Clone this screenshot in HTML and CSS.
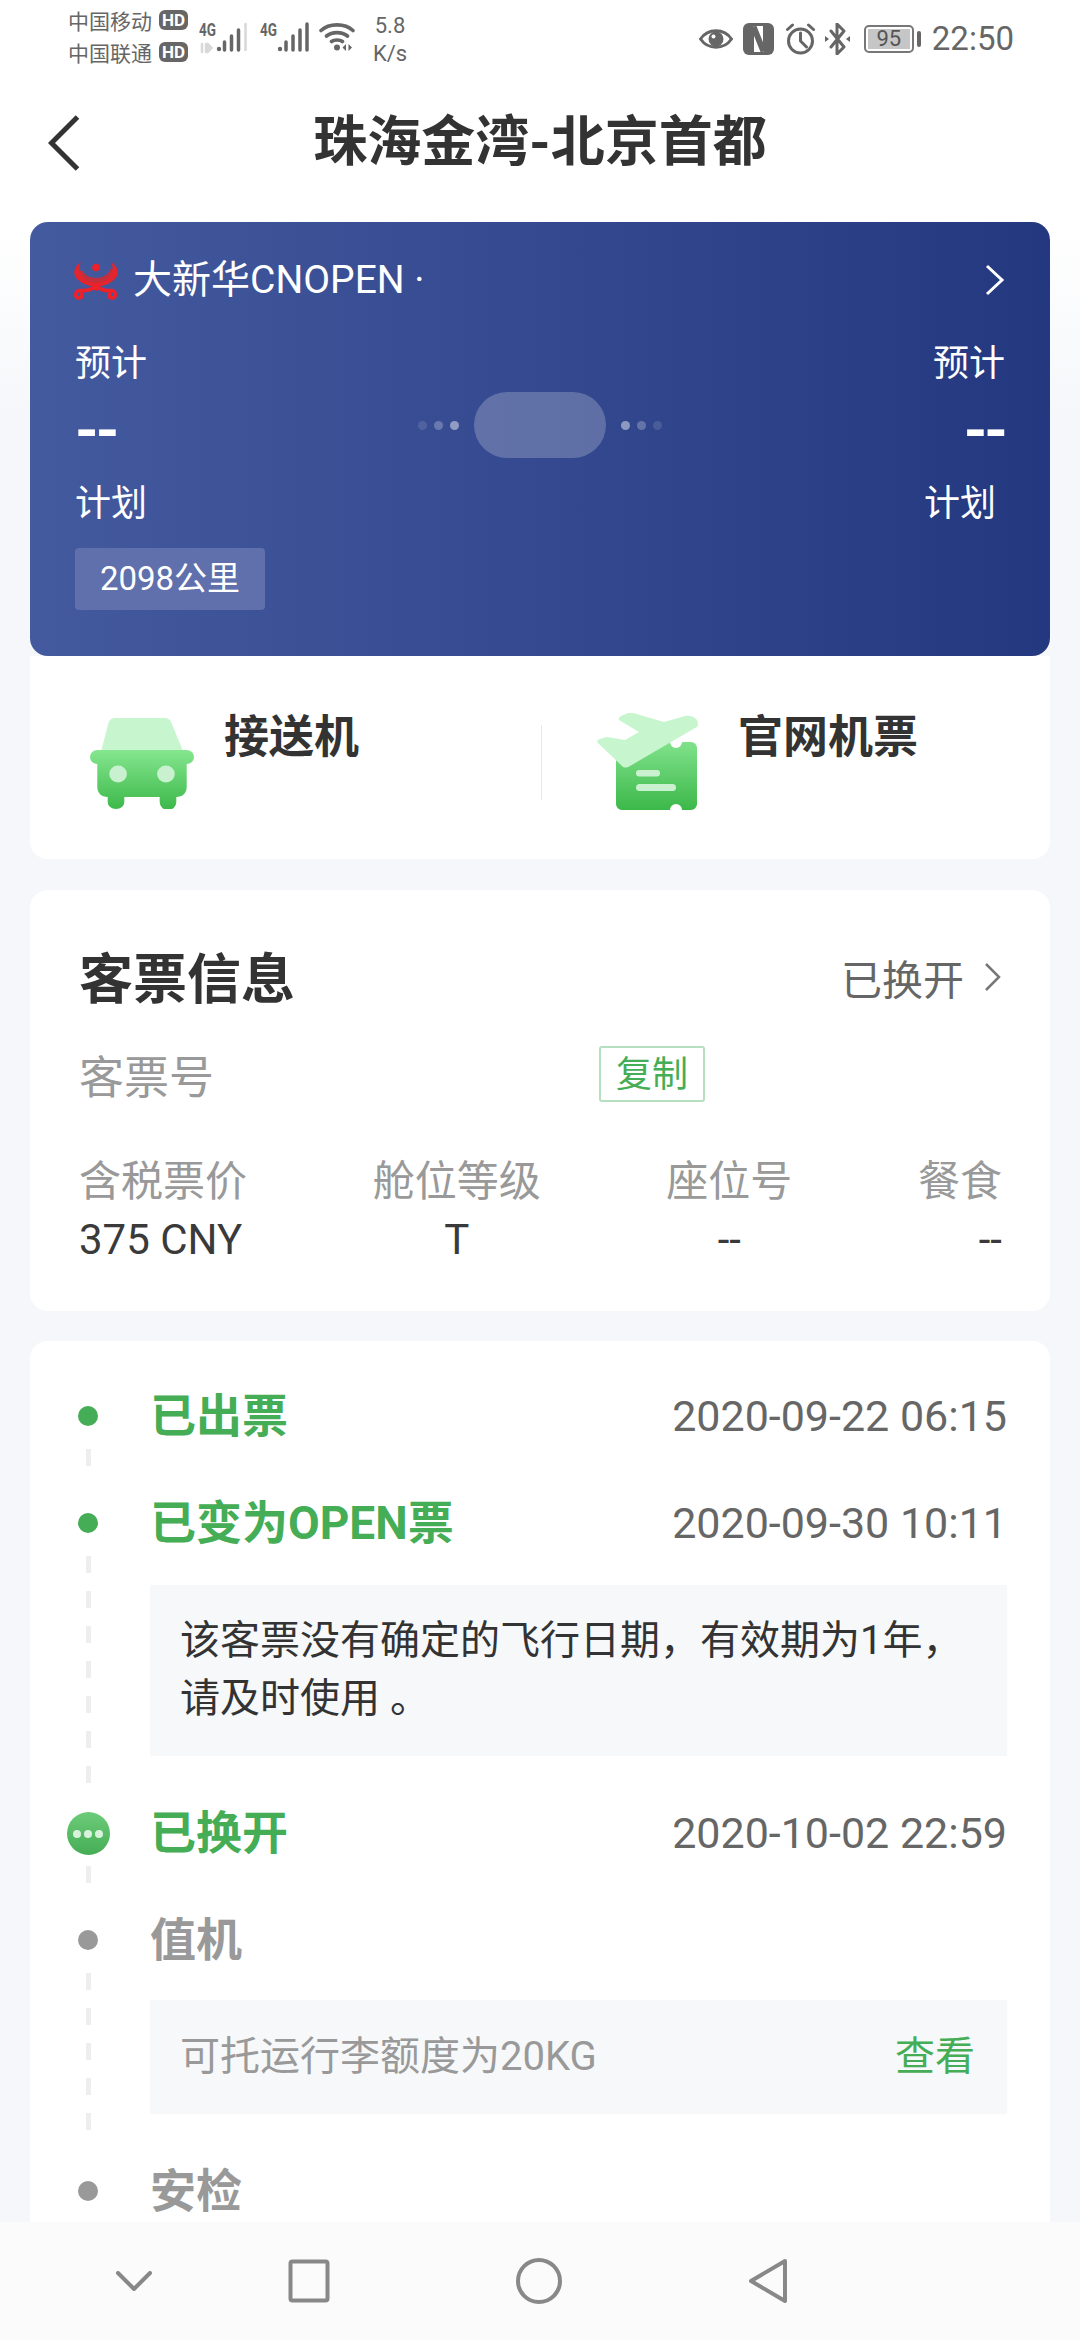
FILE: index.html
```html
<!DOCTYPE html>
<html lang="zh-CN">
<head>
<meta charset="utf-8">
<title>珠海金湾-北京首都</title>
<link rel="stylesheet" href="styles.css">
</head>
<body>
<div class="app">
  <div class="status">
    <div class="carriers">
      <div class="carrier"><span>中国移动</span><b class="hd">HD</b></div>
      <div class="carrier"><span>中国联通</span><b class="hd">HD</b></div>
    </div>
    <svg class="sig" viewBox="0 0 50 38">
      <text class="sig-t" x="0" y="20" textLength="17" lengthAdjust="spacingAndGlyphs">4G</text>
      <path class="sig-faint" d="M3 28v8M7 28v8M9.500 29l3 3-3 3zM46.500 8v26" />
      <circle class="sig-f" cx="20" cy="33" r="2.200"/>
      <path class="sig-s" d="M25.500 26v8M32.500 20v14M39.500 14v20"/>
    </svg>
    <svg class="sig sig2" viewBox="0 0 50 38">
      <text class="sig-t" x="0" y="20" textLength="17" lengthAdjust="spacingAndGlyphs">4G</text>
      <circle class="sig-f" cx="20" cy="33" r="2.200"/>
      <path class="sig-s" d="M26 26v8M33 20v14M40 14v20M47 8v26"/>
    </svg>
    <svg class="wifi" viewBox="0 0 36 30">
      <path class="wifi-s" d="M2 8.500C10 1 26 1 34 8.500M7.500 14C13 9.500 23 9.500 28.500 14M12.500 19.500C15 17.500 21 17.500 23.500 19.500"/>
      <circle class="sig-f" cx="18" cy="25.500" r="3"/>
      <path class="sig-f" d="M27 22v7l-3.500-3.500zM29.500 22v7l3.500-3.500z"/>
    </svg>
    <div class="speed"><span>5.8</span><span>K/s</span></div>
    <div class="status-right">
      <svg class="i-eye" viewBox="0 0 34 26">
        <path class="st-line" d="M1.500 13C9 2 25 2 32.500 13 25 24 9 24 1.500 13Z"/>
        <circle class="sig-f" cx="17" cy="13" r="7.500"/>
        <circle class="st-hole" cx="14.500" cy="10.500" r="2"/>
      </svg>
      <svg class="i-nfc" viewBox="0 0 31 32">
        <rect class="sig-f" width="31" height="32" rx="6"/>
        <path class="st-white" d="M10.500 3h10v26h-10z"/>
        <path class="nfc-band" d="M10.500 3.500l10 25"/>
        <path class="nfc-edge" d="M10.500 9v20M20.500 3v20"/>
      </svg>
      <svg class="i-alarm" viewBox="0 0 31 32">
        <circle class="st-line" cx="15.500" cy="18" r="12"/>
        <path class="st-line" d="M15.500 10v8l6 6M2.500 6.500l5-4.500M28.500 6.500l-5-4.500"/>
      </svg>
      <svg class="i-bt" viewBox="0 0 25 32">
        <path class="st-line" d="M6 8l13 16-7 7V1l7 7L6 24"/>
        <path class="sig-f" d="M0 13l4 3-4 3zM25 13l-4 3 4 3z"/>
      </svg>
      <div class="battery"><div class="battery-level">95</div></div>
      <div class="battery-tip"></div>
      <div class="clock">22:50</div>
    </div>
  </div>

  <header class="topbar">
    <svg class="back" viewBox="0 0 32 56"><path d="M29.500 2 3.500 28l26 26"/></svg>
    <h1 class="title">珠海金湾-北京首都</h1>
    <div></div>
  </header>

  <main class="content">
    <section class="flight">
      <div class="flight-head">
        <svg class="logo" viewBox="0 0 45 39">
          <path class="logo-a" d="M8 1C2 5 0 10 2 15c3 6 12 10 21 11 9-1 18-5 21-11 2-5 0-10-6-14 2 4 2 7 0 10-3 4-9 6-15 6S11 15 8 11C6 8 6 5 8 1Z"/>
          <path class="logo-b" d="M8 7c2 6 8 10 15 10s13-4 15-10c1 7-3 11-7 13-5 2-11 2-16 0-4-2-8-6-7-13Z"/>
          <circle class="logo-c" cx="23" cy="6.500" r="3.800"/>
          <path class="logo-curl" d="M23 24C18 30 12 30 7 29.500c-5 0-6 7.500-1 7.500 3 0 4-3 2-4M23 24C28 30 34 30 38 29.500c5 0 6 7.500 1 7.500-3 0-4-3-2-4"/>
          <path class="logo-c" d="M23 21l5 6-5 3-5-3z"/>
        </svg>
        <span class="airline">大新华CNOPEN ·</span>
        <svg class="head-arrow" viewBox="0 0 20 32"><path d="M2 2l15 14L2 30"/></svg>
      </div>
      <div class="flight-body">
        <div class="ends">
          <div class="lbl">预计</div>
          <div class="time">--</div>
          <div class="lbl">计划</div>
          <div class="distance">2098公里</div>
        </div>
        <div class="route">
          <i class="d d1"></i><i class="d d2"></i><i class="d d3"></i>
          <div class="pill"></div>
          <i class="d d3"></i><i class="d d2"></i><i class="d d1"></i>
        </div>
        <div class="ends ends-r">
          <div class="lbl">预计</div>
          <div class="time">--</div>
          <div class="lbl lbl-inset">计划</div>
        </div>
      </div>
    </section>

    <section class="services">
      <div class="service service-l">
        <svg class="i-car" viewBox="0 0 100 92" preserveAspectRatio="none">
          <defs>
            <linearGradient id="gc" x1="0" y1="0" x2="0" y2="1"><stop offset="0" stop-color="#85e68f"/><stop offset="1" stop-color="#3cb849"/></linearGradient>
          </defs>
          <path class="pale" d="M24 1h48c3 0 5 2 6 4l11 28H11L18 5c1-2 3-4 6-4Z"/>
          <path fill="url(#gc)" d="M7 33h86a6.500 6.500 0 0 1 0 14v23c0 6-4 10-10 10v5a7 7 0 0 1-16 0v-5H33v5a8 7 0 0 1-16 0v-5c-6 0-10-4-10-10V47a6.500 6.500 0 0 1 0-14Z"/>
          <circle class="lamp" cx="27" cy="57" r="8.500"/>
          <circle class="lamp" cx="73" cy="57" r="8.500"/>
        </svg>
        <span class="service-name">接送机</span>
      </div>
      <div class="divider"></div>
      <div class="service service-r">
        <svg class="i-ticket" viewBox="0 0 102 98">
          <defs>
            <linearGradient id="gt" x1="0" y1="0" x2="0" y2="1"><stop offset="0" stop-color="#80e28b"/><stop offset="1" stop-color="#3cb849"/></linearGradient>
          </defs>
          <path fill="url(#gt)" d="M25 29h48a6 6 0 0 0 12 0h9a6 6 0 0 1 6 6v56a6 6 0 0 1-6 6h-9a6 6 0 0 0-12 0H25a6 6 0 0 1-6-6V35a6 6 0 0 1 6-6Z"/>
          <path class="pale" d="M88 3c8-1 13 3 13 8 0 2-1 3-3 4L33 53c-3 2-6 2-8 0L2 31c-3-2-2-4 1-5l7-2 18 3 14-8L22 7c-1-2 0-2 2-4l7-3c2-1 3-1 5 0l31 9Z"/>
          <rect class="lamp" x="39" y="57" width="24" height="6.500" rx="3.200"/>
          <rect class="lamp" x="39" y="71" width="40" height="7" rx="3.500"/>
        </svg>
        <span class="service-name">官网机票</span>
      </div>
    </section>

    <section class="card ticket">
      <div class="ticket-head">
        <h2 class="ticket-title">客票信息</h2>
        <div class="ticket-state">已换开<svg class="state-arrow" viewBox="0 0 18 30"><path d="M2 2l13 13L2 28"/></svg></div>
      </div>
      <div class="ticket-no">
        <span class="ticket-no-l">客票号</span>
        <span class="copy">复制</span>
      </div>
      <div class="facts">
        <div class="fact fact-l"><div class="fact-k">含税票价</div><div class="fact-v">375 CNY</div></div>
        <div class="fact"><div class="fact-k">舱位等级</div><div class="fact-v">T</div></div>
        <div class="fact"><div class="fact-k">座位号</div><div class="fact-v">--</div></div>
        <div class="fact fact-r"><div class="fact-k">餐食</div><div class="fact-v">--</div></div>
      </div>
    </section>

    <section class="card timeline">
      <div class="step">
        <div class="rail"><i class="dot dot-on"></i><i class="dash"></i></div>
        <div class="step-main">
          <div class="step-row"><span class="step-name on">已出票</span><span class="step-date">2020-09-22 06:15</span></div>
        </div>
      </div>
      <div class="step">
        <div class="rail"><i class="dot dot-on"></i><i class="dash"></i></div>
        <div class="step-main">
          <div class="step-row"><span class="step-name on">已变为OPEN票</span><span class="step-date">2020-09-30 10:11</span></div>
          <div class="note">该客票没有确定的飞行日期，有效期为1年，<br>请及时使用<span class="stop">。</span></div>
        </div>
      </div>
      <div class="step">
        <div class="rail"><div class="dot-now"><i></i><i></i><i></i></div><i class="dash dash-now"></i></div>
        <div class="step-main">
          <div class="step-row"><span class="step-name on">已换开</span><span class="step-date">2020-10-02 22:59</span></div>
        </div>
      </div>
      <div class="step">
        <div class="rail"><i class="dot"></i><i class="dash"></i></div>
        <div class="step-main">
          <div class="step-row"><span class="step-name">值机</span></div>
          <div class="note note-row"><span class="note-grey">可托运行李额度为20KG</span><span class="note-link">查看</span></div>
        </div>
      </div>
      <div class="step">
        <div class="rail"><i class="dot"></i></div>
        <div class="step-main">
          <div class="step-row"><span class="step-name">安检</span></div>
        </div>
      </div>
    </section>
  </main>

  <nav class="nav">
    <svg class="n-down" viewBox="0 0 36 20"><path d="M2 2l16 16L34 2"/></svg>
    <svg class="n-square" viewBox="0 0 42 44"><rect x="2.500" y="2.500" width="37" height="39" rx="2"/></svg>
    <svg class="n-circle" viewBox="0 0 46 46"><circle cx="23" cy="23" r="21"/></svg>
    <svg class="n-back" viewBox="0 0 40 46"><path d="M37 3 3 23l34 20Z"/></svg>
  </nav>
</div>
</body>
</html>
```
FILE: styles.css
```css
* { box-sizing: border-box; }
html, body { margin: 0; padding: 0; }
body {
  width: 1080px;
  height: 2340px;
  overflow: hidden;
  font-family: Roboto, "Noto Sans CJK SC", sans-serif;
  color: #333;
}
.app {
  position: relative;
  width: 1080px;
  height: 2340px;
  overflow: hidden;
  background: linear-gradient(#fff 0, #fff 222px, #f5f7fa 420px);
}

/* status bar */
.status {
  display: flex;
  align-items: flex-start;
  height: 76px;
  padding: 6px 66px 0 68px;
  color: #666;
}
.carriers { display: flex; flex: none; flex-direction: column; gap: 5px; width: 131px; }
.carrier { display: flex; align-items: center; gap: 7px; height: 27px; font-size: 21px; white-space: nowrap; }
.hd {
  flex: none;
  background: #666;
  color: #fff;
  font-size: 17px;
  line-height: 20px;
  width: 29px;
  height: 20px;
  border-radius: 6px;
  text-align: center;
}
.sig { flex: none; width: 50px; height: 38px; margin-top: 10px; margin-right: 11px; }
.sig-t { font-family: Roboto, sans-serif; font-size: 18px; font-weight: 700; fill: #666; }
.sig-s { fill: none; stroke: #666; stroke-width: 3.500; stroke-linecap: round; }
.sig-f { fill: #666; }
.sig-faint { fill: #d8d8d8; stroke: #d8d8d8; stroke-width: 2.500; stroke-linecap: round; }
.sig2 { margin-right: 9px; }
.wifi { flex: none; width: 36px; height: 30px; margin-top: 16px; }
.wifi-s { fill: none; stroke: #666; stroke-width: 3.600; stroke-linecap: round; }
.speed {
  display: flex;
  flex: none;
  flex-direction: column;
  align-items: center;
  width: 32px;
  margin-left: 19px;
  margin-top: 6px;
  font-size: 22px;
  line-height: 28px;
}
.status-right { display: flex; align-items: center; margin-left: auto; margin-top: 14px; }
.st-line { fill: none; stroke: #666; stroke-width: 3; stroke-linecap: round; stroke-linejoin: round; }
.st-hole { fill: #fff; }
.st-white { fill: #fff; }
.nfc-band { fill: none; stroke: #666; stroke-width: 6; }
.nfc-edge { fill: none; stroke: #666; stroke-width: 1; }
.i-eye { width: 34px; height: 26px; margin-right: 10px; }
.i-nfc { width: 31px; height: 32px; margin-right: 11px; }
.i-alarm { width: 31px; height: 32px; margin-right: 9px; }
.i-bt { width: 25px; height: 32px; margin-right: 14px; }
.battery {
  width: 50px;
  height: 28px;
  border: 2px solid #777;
  border-radius: 5px;
  padding: 2px;
}
.battery-level {
  height: 100%;
  background: #c6c6c6;
  color: #555;
  font-size: 22px;
  line-height: 20px;
  text-align: center;
}
.battery-tip { width: 4px; height: 16px; background: #666; border-radius: 2px; margin: 0 11px 0 3px; }
.clock { font-size: 33px; line-height: 38px; font-weight: 400; }

/* header */
.topbar {
  display: grid;
  grid-template-columns: 1fr auto 1fr;
  align-items: center;
  height: 134px;
  padding: 0 48px;
  margin-bottom: 12px;
}
.back { width: 32px; height: 56px; }
.back path { fill: none; stroke: #333; stroke-width: 5; }
.title { margin: 0; font-size: 54px; line-height: 70px; font-weight: 700; color: #333; }

/* hero */
.content { display: flex; flex-direction: column; padding: 0 30px; }
.flight {
  height: 434px;
  padding: 37px 45px 0;
  border-radius: 18px;
  color: #fff;
  background: linear-gradient(90deg, #445a9f, #34498f 50%, #24387f);
}
.flight-head { display: flex; align-items: center; height: 42px; margin-left: -2px; }
.logo { width: 45px; height: 39px; margin-right: 15px; }
.logo-a { fill: #e3252e; }
.logo-b { fill: #c0303f; }
.logo-c { fill: #ee2029; }
.logo-curl { fill: none; stroke: #ee2029; stroke-width: 3.600; stroke-linecap: round; }
.airline { font-size: 39px; line-height: 42px; }
.head-arrow { width: 20px; height: 32px; margin-left: auto; }
.head-arrow path { fill: none; stroke: #fff; stroke-width: 3; }
.flight-body { display: grid; grid-template-columns: 1fr auto 1fr; margin-top: 40px; }
.ends { display: flex; flex-direction: column; align-items: flex-start; }
.ends-r { align-items: flex-end; }
.lbl { font-size: 36px; line-height: 46px; }
.lbl-inset { margin-right: 9px; }
.time { font-size: 60px; line-height: 70px; height: 72px; margin: 9px 0 13px; font-weight: 700; letter-spacing: -3px; }
.distance {
  margin-top: 21px;
  width: 190px;
  height: 62px;
  border-radius: 4px;
  background: #5f70ac;
  font-size: 33px;
  line-height: 62px;
  text-align: center;
}
.route { display: flex; align-items: center; gap: 7px; height: 66px; margin-top: 51px; }
.pill { width: 132px; height: 66px; border-radius: 33px; background: rgba(255, 255, 255, .22); margin: 0 8px; }
.d { width: 9px; height: 9px; border-radius: 50%; background: #fff; }
.d1 { opacity: .12; }
.d2 { opacity: .25; }
.d3 { opacity: .45; }

/* services */
.services {
  display: flex;
  height: 203px;
  background: #fff;
  border-radius: 0 0 18px 18px;
  margin-bottom: 31px;
}
.service { display: flex; align-items: flex-start; }
.service-l { width: 511px; padding: 61px 0 0 60px; gap: 30px; }
.service-r { flex: 1; padding: 57px 0 0 55px; gap: 39px; }
.i-car { width: 104px; height: 92px; }
.i-ticket { width: 102px; height: 98px; }
.service-name { font-size: 45px; line-height: 56px; font-weight: 700; margin-top: -7px; }
.service-r .service-name { margin-top: -3px; }
.pale { fill: #c7f5ce; }
.lamp { fill: #c9f1cf; }
.divider { width: 1px; height: 75px; margin-top: 69px; background: #e8e8e8; }

/* cards */
.card { background: #fff; border-radius: 18px; }
.ticket { height: 421px; padding: 55px 48px 0 49px; margin-bottom: 30px; }
.ticket-head { display: flex; justify-content: space-between; align-items: center; height: 72px; }
.ticket-title { margin: 0; font-size: 54px; line-height: 72px; font-weight: 700; }
.ticket-state { display: flex; align-items: center; gap: 20px; font-size: 41px; color: #666; margin-top: -8px; }
.state-arrow { width: 18px; height: 30px; }
.state-arrow path { fill: none; stroke: #777; stroke-width: 2.500; }
.ticket-no { display: flex; align-items: center; height: 56px; margin-top: 29px; }
.ticket-no-l { width: 520px; font-size: 45px; color: #999; }
.copy {
  width: 106px;
  height: 56px;
  border: 2px solid #b6dfc0;
  border-radius: 3px;
  color: #45ad55;
  font-size: 36px;
  line-height: 55px;
  text-align: center;
}
.facts { display: flex; justify-content: space-between; margin-top: 52px; }
.fact { display: flex; flex-direction: column; align-items: center; }
.fact-l { align-items: flex-start; }
.fact-r { align-items: flex-end; }
.fact-k { font-size: 42px; line-height: 56px; color: #999; }
.fact-v { font-size: 42px; line-height: 56px; margin-top: 2px; color: #3a3a3a; }

/* timeline */
.timeline { padding: 45px 43px 0 0; min-height: 1000px; }
.step { display: grid; grid-template-columns: 120px 1fr; }
.rail { display: flex; flex-direction: column; align-items: center; width: 116px; }
.dot { flex: none; width: 20px; height: 20px; margin-top: 20px; border-radius: 50%; background: #999; }
.dot-on { background: #45ad55; }
.dot-now {
  flex: none;
  display: flex;
  align-items: center;
  justify-content: center;
  gap: 3px;
  width: 43px;
  height: 43px;
  margin-top: 9px;
  border-radius: 50%;
  background: linear-gradient(#6dcb79, #45ad55);
}
.dot-now i { width: 8px; height: 8px; border-radius: 50%; background: #d8f3dc; }
.dash {
  flex: 1;
  width: 5px;
  margin: 23px 0 20px;
  background: repeating-linear-gradient(#eee 0, #eee 17px, transparent 17px, transparent 35px);
}
.dash-now { margin-top: 11px; }
.step-main { padding-bottom: 47px; }
.step-row { display: flex; justify-content: space-between; align-items: center; height: 60px; }
.step-name { font-size: 46px; line-height: 60px; margin-top: 0; font-weight: 700; color: #999; }
.step-name.on { color: #45ad55; }
.step-date { font-size: 43px; color: #666; }
.note {
  margin-top: 32px;
  padding: 27px 30px 28px;
  background: #f6f8fa;
  font-size: 40px;
  line-height: 58px;
  color: #333;
}
.stop { margin-left: 10px; }
.note-row { display: flex; justify-content: space-between; margin-top: 30px; padding: 28px 32px 28px 30px; }
.note-grey { color: #999; }
.note-link { color: #45ad55; }

.nav {
  position: absolute;
  left: 0;
  right: 0;
  bottom: 0;
  display: flex;
  align-items: center;
  gap: 186px;
  height: 118px;
  padding: 0 0 0 116px;
  background: #fbfbfb;
}
.nav path, .nav rect, .nav circle { fill: none; stroke: #888; stroke-width: 4; stroke-linejoin: round; stroke-linecap: round; }
.n-down { width: 36px; height: 20px; margin-right: -50px; }
.n-square { width: 42px; height: 44px; }
.n-circle { width: 46px; height: 46px; }
.n-back { width: 40px; height: 46px; }
```
